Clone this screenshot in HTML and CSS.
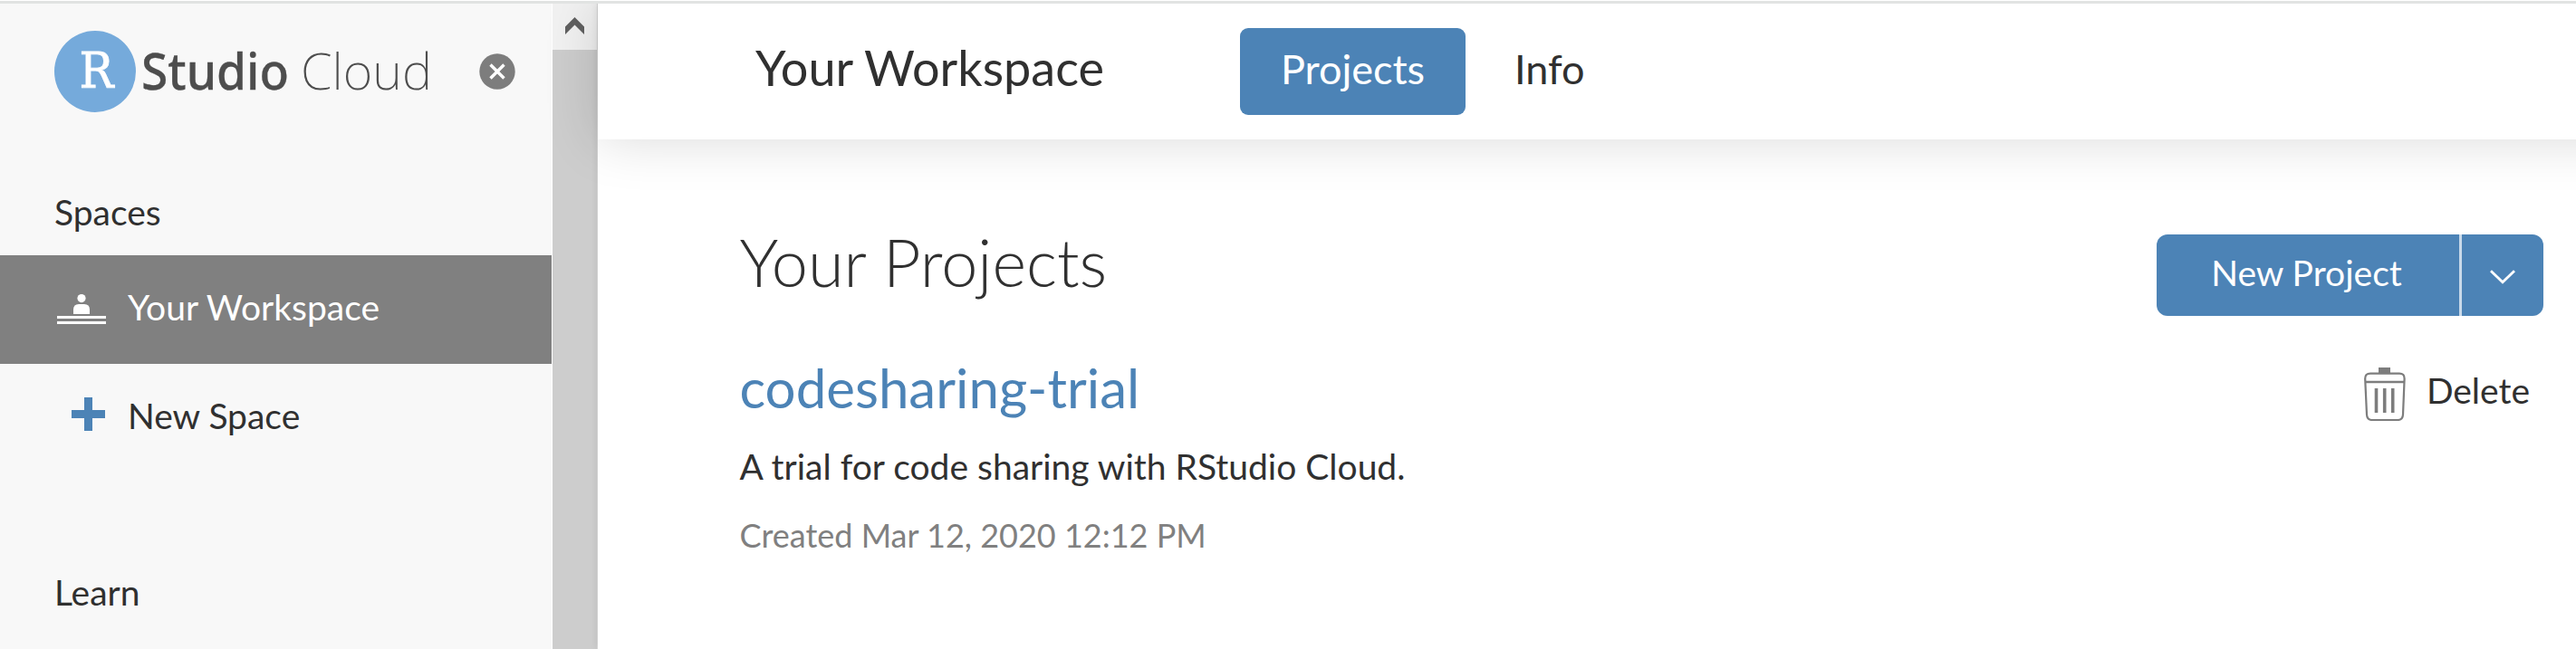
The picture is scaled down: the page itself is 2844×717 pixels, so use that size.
FILE: index.html
```html
<!DOCTYPE html>
<html lang="en">
<head>
<meta charset="utf-8">
<title>RStudio Cloud</title>
<link rel="stylesheet" href="styles.css">
</head>
<body>
<div class="app">
  <aside class="sidebar">
    <div class="brand">
      <svg class="logo" width="430" height="90" viewBox="0 0 430 90" role="img" aria-label="RStudio Cloud">
        <circle cx="45" cy="45" r="45" fill="#75aadb"/>
        <text class="logo-r" x="27.5" y="63" textLength="38" lengthAdjust="spacingAndGlyphs">R</text>
        <text class="logo-studio" x="96" y="64.5" textLength="163" lengthAdjust="spacingAndGlyphs">Studio</text>
        <text class="logo-cloud" x="272" y="64.5" textLength="145" lengthAdjust="spacingAndGlyphs">Cloud</text>
      </svg>
      <svg class="close" width="40" height="40" viewBox="0 0 40 40">
        <circle cx="20" cy="20" r="19.7" fill="#7d7d7d"/>
        <path d="M12.5 12.5l15 15M27.5 12.5l-15 15" stroke="#fff" stroke-width="3.4"/>
      </svg>
    </div>
    <h2 class="section">Spaces</h2>
    <a class="item selected">
      <svg class="desk" width="54" height="34" viewBox="0 0 54 34" fill="#fff">
        <circle cx="27" cy="4.6" r="4.6"/>
        <path d="M18 22v-5q0-6 6-6h6q6 0 6 6v5z"/>
        <path d="M0 24h54v3H0zM0 30h54v3H0z"/>
      </svg>
      <span>Your Workspace</span>
    </a>
    <a class="item">
      <svg class="plus" width="37" height="37" viewBox="0 0 37 37"><path d="M14 0h9v14h14v9H23v14h-9V23H0v-9h14z" fill="#4c83b6"/></svg>
      <span>New Space</span>
    </a>
    <h2 class="section learn">Learn</h2>
  </aside>
  <div class="scrollbar">
    <div class="scroll-up">
      <svg width="21" height="19" viewBox="0 0 21 19"><path d="M10.5 0L21 10.5V19L10.5 8.5 0 19v-8.5z" fill="#606060"/></svg>
    </div>
  </div>
  <main class="main">
    <header class="topbar">
      <h1 class="title">Your Workspace</h1>
      <a class="tab active">Projects</a>
      <a class="tab">Info</a>
    </header>
    <div class="content">
      <section class="projects">
        <h2 class="heading">Your Projects</h2>
        <a class="name">codesharing-trial</a>
        <p class="desc">A trial for code sharing with RStudio Cloud.</p>
        <p class="meta">Created Mar 12, 2020 12:12 PM</p>
      </section>
      <div class="actions">
        <div class="split">
          <button class="new">New Project</button>
          <button class="more">
            <svg width="28" height="16" viewBox="0 0 28 16"><path d="M1 1.2l13 12.6 13-12.6" fill="none" stroke="#fff" stroke-width="2.8"/></svg>
          </button>
        </div>
        <a class="delete">
          <svg width="46" height="59" viewBox="0 0 46 59" fill="none" stroke="#7d7d7d">
            <path d="M16 0h13v6H16z" fill="#7d7d7d" stroke="none"/>
            <path d="M7 6.6h32q5.8 0 5.6 6L43 52q-.3 6-6 6H9q-5.700 0-6-6L1.200 12.600Q1 6.600 7 6.600z" stroke-width="2.200"/>
            <path d="M2 16h42" stroke-width="2.600"/>
            <path d="M13.500 23v27M22.700 23v27M31.700 23v27" stroke-width="3.600"/>
          </svg>
          <span>Delete</span>
        </a>
      </div>
    </div>
  </main>
</div>
</body>
</html>
```
FILE: styles.css
```css
* { box-sizing: border-box; }
body { margin: 0; background: #fff; color: #303030; font-family: Lato, sans-serif; font-size: 39px; overflow: hidden; }
h1, h2, p { margin: 0; font-weight: 400; }
svg { display: block; flex: none; }
.app { display: flex; height: 716px; margin-top: 1px; overflow: hidden; border-top: 3px solid #e1e3e2; }
.sidebar { width: 609px; flex: none; background: #f8f8f8; }
.brand { display: flex; align-items: center; justify-content: space-between; height: 150px; padding: 0 40px 0 60px; }
.logo { overflow: visible; }
.logo text { fill: #4d4d4d; }
.logo .logo-r { font-family: "DejaVu Serif", serif; font-size: 55px; fill: #fff; stroke: #fff; stroke-width: .8px; }
.logo .logo-studio { font-family: "Noto Sans", sans-serif; font-weight: 500; font-size: 56px; stroke: #4d4d4d; stroke-width: .3px; }
.logo .logo-cloud { font-family: "Noto Sans", "Open Sans", sans-serif; font-weight: 200; font-size: 56px; }
.section { height: 128px; padding: 56px 0 0 60px; font-size: 39px; line-height: 48px; }
.section.learn { padding-top: 108px; }
.item { display: flex; align-items: center; height: 120px; padding-left: 63px; }
.item span { padding-bottom: 7px; }
.item.selected { background: #808080; color: #fff; }
.desk { margin-right: 24px; }
.plus { margin: 0 25px 9px 16px; }
.scrollbar { width: 51px; flex: none; background: #cdcdcd; border-left: 1px solid #fff; border-right: 1px solid #dadada; }
.scroll-up { height: 51px; background: #f1f1f1; padding: 15px 0 0 14px; }
.main { flex: 1; position: relative; background: #fff; box-shadow: 0 0 8px rgba(0,0,0,.1); }
.topbar { display: flex; align-items: center; height: 150px; margin-right: -80px; padding-left: 174px; background: #fff; box-shadow: 0 0 60px rgba(0,0,0,.15); }
.title { width: 535px; font-size: 54px; line-height: 64px; padding-bottom: 9px; }
.tab { height: 96px; padding: 0 46px; font-size: 45px; line-height: 90px; border-radius: 9px; }
.tab.active { width: 249px; padding: 0; text-align: center; background: #4c83b6; color: #fff; margin-right: 8px; }
.content { display: flex; justify-content: space-between; padding: 0 36px 0 156.5px; }
.projects { display: flex; flex-direction: column; }
.heading { margin-top: 90px; font-size: 72px; line-height: 90px; font-weight: 300; }
.name { margin-top: 56px; font-size: 60px; line-height: 76px; color: #4c83b6; }
.desc { margin-top: 24px; line-height: 50px; }
.meta { margin-top: 24px; font-size: 36px; line-height: 54px; color: #808080; }
.actions { display: flex; flex-direction: column; align-items: flex-end; padding-top: 105px; }
.split { display: flex; height: 90px; border-radius: 12px; overflow: hidden; background: #4c83b6; }
.split button { border: 0; margin: 0; background: none; color: #fff; font: 39px/48px Lato, sans-serif; }
.split .new { width: 337px; padding: 0 3px 6px 0; border-right: 3px solid #c9daea; }
.split .more { display: grid; place-items: center; width: 90px; padding: 4px 0 0; }
.delete { display: flex; margin-top: 57px; padding-right: 15px; }
.delete span { margin-left: 23px; padding-top: 1px; line-height: 48px; }
```
